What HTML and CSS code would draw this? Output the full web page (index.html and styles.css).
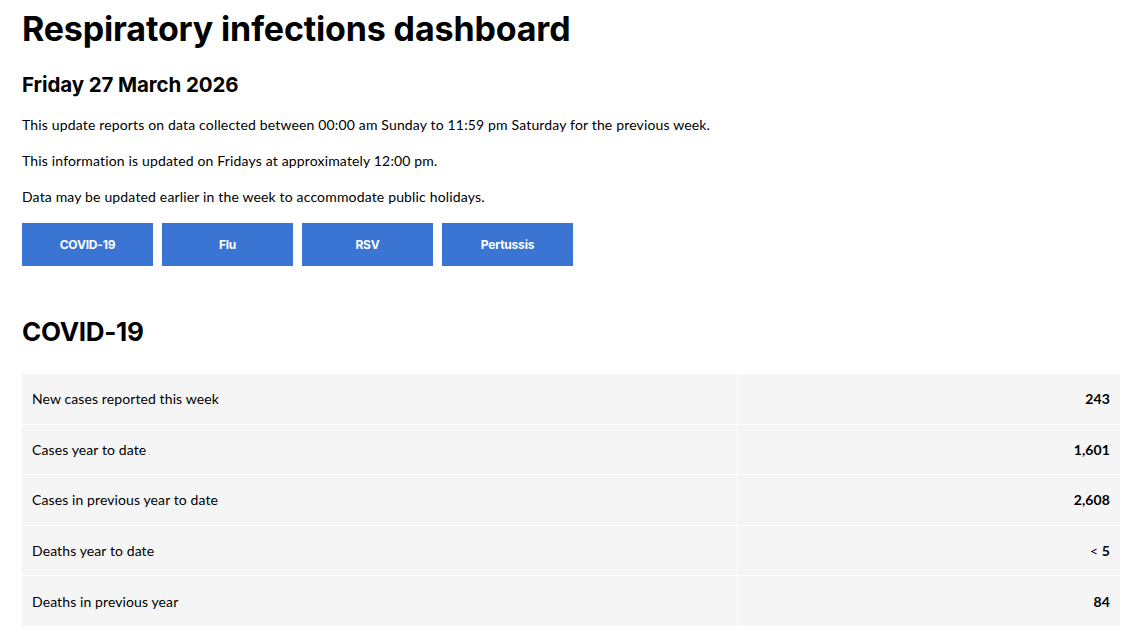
FILE: index.html
```html
<!DOCTYPE html>
<html lang="en">
<head>
<meta charset="utf-8">
<title>Respiratory infections dashboard</title>
<link rel="stylesheet" href="styles.css">
</head>
<body>
<main class="page">
  <h1 class="title">Respiratory infections dashboard</h1>
  <h2 class="date">Friday 27 March 2026</h2>
  <p class="note">This update reports on data collected between 00:00 am Sunday to 11:59 pm Saturday for the previous week.</p>
  <p class="note">This information is updated on Fridays at approximately 12:00 pm.</p>
  <p class="note">Data may be updated earlier in the week to accommodate public holidays.</p>
  <nav class="tabs">
    <a class="tab" href="#covid">COVID-19</a>
    <a class="tab" href="#flu">Flu</a>
    <a class="tab" href="#rsv">RSV</a>
    <a class="tab" href="#pertussis">Pertussis</a>
  </nav>
  <section id="covid" class="section">
    <h2 class="section-title">COVID-19</h2>
    <table class="stats">
      <tbody>
        <tr><td class="label">New cases reported this week</td><td class="value">243</td></tr>
        <tr><td class="label">Cases year to date</td><td class="value">1,601</td></tr>
        <tr><td class="label">Cases in previous year to date</td><td class="value">2,608</td></tr>
        <tr><td class="label">Deaths year to date</td><td class="value"><span class="lt">&lt;</span> 5</td></tr>
        <tr><td class="label">Deaths in previous year</td><td class="value">84</td></tr>
      </tbody>
    </table>
  </section>
</main>
</body>
</html>
```
FILE: styles.css
```css
html, body {
  margin: 0;
  padding: 0;
  background: #ffffff;
}
body {
  font-family: "Lato", "Liberation Sans", sans-serif;
  color: #000000;
}
.page {
  padding: 0 20px 0 22px;
}
.title {
  margin: 0;
  padding-top: 8px;
  font-family: "Inter", "Lato", sans-serif;
  font-size: 34px;
  line-height: 42px;
  font-weight: 700;
  letter-spacing: -0.15px;
}
.date {
  margin: 22px 0 0;
  font-family: "Inter", "Lato", sans-serif;
  font-size: 20.5px;
  line-height: 26px;
  font-weight: 700;
  letter-spacing: -0.1px;
}
.note {
  margin: 16px 0 0;
  font-size: 14px;
  line-height: 20px;
  letter-spacing: 0.16px;
}
.date + .note {
  margin-top: 17px;
}
.tabs {
  display: flex;
  gap: 9px;
  margin-top: 16px;
}
.tab {
  width: 131px;
  height: 43px;
  display: flex;
  align-items: center;
  justify-content: center;
  background: #3a75d4;
  color: #ffffff;
  font-family: "Inter", "Lato", sans-serif;
  font-size: 12px;
  font-weight: 700;
  letter-spacing: -0.2px;
  text-decoration: none;
}
.section-title {
  margin: 49px 0 0;
  font-family: "Inter", "Lato", sans-serif;
  font-size: 26px;
  line-height: 34px;
  font-weight: 700;
  letter-spacing: -0.3px;
}
.stats {
  margin-top: 25px;
  width: 1098px;
  border-collapse: collapse;
  font-size: 14px;
  letter-spacing: 0.1px;
}
.stats tr {
  height: 50.4px;
}
.stats td {
  background: #f5f5f5;
  border: 1px solid #ffffff;
  padding: 0 10px;
}
.stats tr:first-child td { border-top: 0; }
.stats tr:last-child td { border-bottom: 0; }
.stats td:first-child { border-left: 0; }
.stats td:last-child { border-right: 0; }
.label {
  width: 695px;
}
.value {
  text-align: right;
  font-weight: 700;
}
.lt {
  font-weight: 400;
}
```
